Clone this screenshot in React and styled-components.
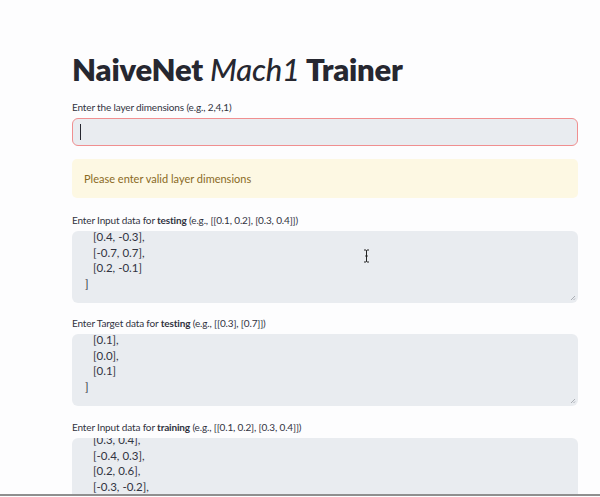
import React from "react";
import styled, { createGlobalStyle } from "styled-components";

const GlobalStyle = createGlobalStyle`
  html, body {
    margin: 0;
    background: #fdfdfe;
    font-family: "Lato", "Noto Sans", sans-serif;
    color: #31333f;
  }
`;

const fields = [
  {
    label: ["Enter Input data for ", "testing", " (e.g., [[0.1, 0.2], [0.3, 0.4]])"],
    lines: [
      { text: "[0.4, -0.3],", indent: true },
      { text: "[-0.7, 0.7],", indent: true },
      { text: "[0.2, -0.1]", indent: true },
      { text: "]", indent: false },
    ],
    gap: 15,
    offset: -2,
    cursor: true,
  },
  {
    label: ["Enter Target data for ", "testing", " (e.g., [[0.3], [0.7]])"],
    lines: [
      { text: "[0.1],", indent: true },
      { text: "[0.0],", indent: true },
      { text: "[0.1]", indent: true },
      { text: "]", indent: false },
    ],
    gap: 13,
    offset: -2,
  },
  {
    label: ["Enter Input data for ", "training", " (e.g., [[0.1, 0.2], [0.3, 0.4]])"],
    lines: [
      { text: "[0.3, 0.4],", indent: true },
      { text: "[-0.4, 0.3],", indent: true },
      { text: "[0.2, 0.6],", indent: true },
      { text: "[-0.3, -0.2],", indent: true },
      { text: "[0.1, 0.5],", indent: true },
    ],
    gap: 14,
    offset: -6,
  },
];

export default function App() {
  return (
    <Page>
      <GlobalStyle />
      <Main>
        <Title>
          NaiveNet <em>Mach1</em> Trainer
        </Title>

        <Field>
          <Label>Enter the layer dimensions (e.g., 2,4,1)</Label>
          <Input>
            <Caret />
          </Input>
        </Field>

        <Warning>Please enter valid layer dimensions</Warning>

        {fields.map((field, index) => (
          <Field key={index} $gap={field.gap}>
            <Label>
              {field.label[0]}
              <b>{field.label[1]}</b>
              {field.label[2]}
            </Label>
            <TextArea>
              <Scroller $offset={field.offset}>
                {field.lines.map((line, i) => (
                  <Line key={i} $indent={line.indent}>
                    {line.text}
                  </Line>
                ))}
              </Scroller>
              <Grip viewBox="0 0 6 6">
                <path d="M1 5 L5 1 M3.5 5 L5 3.5" stroke="#9aa0a6" strokeWidth="0.8" />
              </Grip>
              {field.cursor && (
                <IBeam viewBox="0 0 7 14">
                  <path
                    d="M1 1 H3 L3.5 1.6 L4 1 H6 M3.5 1.6 V12.4 M1 13 H3 L3.5 12.4 L4 13 H6 M2.2 7 H4.8"
                    stroke="#222"
                    strokeWidth="1"
                    fill="none"
                  />
                </IBeam>
              )}
            </TextArea>
          </Field>
        ))}
      </Main>
      <BottomRule />
    </Page>
  );
}

const Page = styled.div`
  height: 497px;
  overflow: hidden;
  display: flex;
  flex-direction: column;
`;

const Main = styled.main`
  flex: 1;
  overflow: hidden;
  padding: 47px 22px 0 72px;
`;

const Title = styled.h1`
  margin: 0 0 9px;
  font-size: 31px;
  line-height: 44px;
  font-weight: 800;
  letter-spacing: -0.2px;
  color: #262730;

  em {
    font-style: italic;
    font-weight: 500;
  }
`;

const Field = styled.div`
  display: flex;
  flex-direction: column;
  gap: 4px;
  margin-top: ${(p) => (p.$gap ? `${p.$gap}px` : "0")};
`;

const Label = styled.label`
  font-size: 10px;
  line-height: 14px;
  letter-spacing: -0.15px;
  color: #31333f;

  b {
    font-weight: 700;
  }
`;

const Input = styled.div`
  height: 26px;
  display: flex;
  align-items: center;
  padding: 0 7px;
  background: #e9ecf0;
  border: 1px solid #f08f90;
  border-radius: 6px;
`;

const Caret = styled.span`
  width: 1px;
  height: 16px;
  background: #262730;
`;

const Warning = styled.div`
  margin-top: 13px;
  height: 39px;
  display: flex;
  align-items: center;
  padding: 0 12px;
  background: #fdf8e3;
  border-radius: 5px;
  color: #8a6a1f;
  font-size: 11px;
`;

const TextArea = styled.div`
  position: relative;
  height: 72px;
  background: #e9ecf0;
  border-radius: 6px;
  overflow: hidden;
`;

const Scroller = styled.div`
  margin-top: ${(p) => p.$offset}px;
  padding: 0 13px;
  font-size: 11.5px;
  line-height: 15.5px;
  color: #31333f;
`;

const Line = styled.div`
  padding-left: ${(p) => (p.$indent ? "8px" : "0")};
  white-space: pre;
`;

const Grip = styled.svg`
  position: absolute;
  right: 2px;
  bottom: 2px;
  width: 6px;
  height: 6px;
`;

const IBeam = styled.svg`
  position: absolute;
  left: 291px;
  top: 18px;
  width: 7px;
  height: 14px;
`;

const BottomRule = styled.div`
  height: 1px;
  border-top: 2px solid #8f8f8f;
  background: #fdfdfe;
`;
